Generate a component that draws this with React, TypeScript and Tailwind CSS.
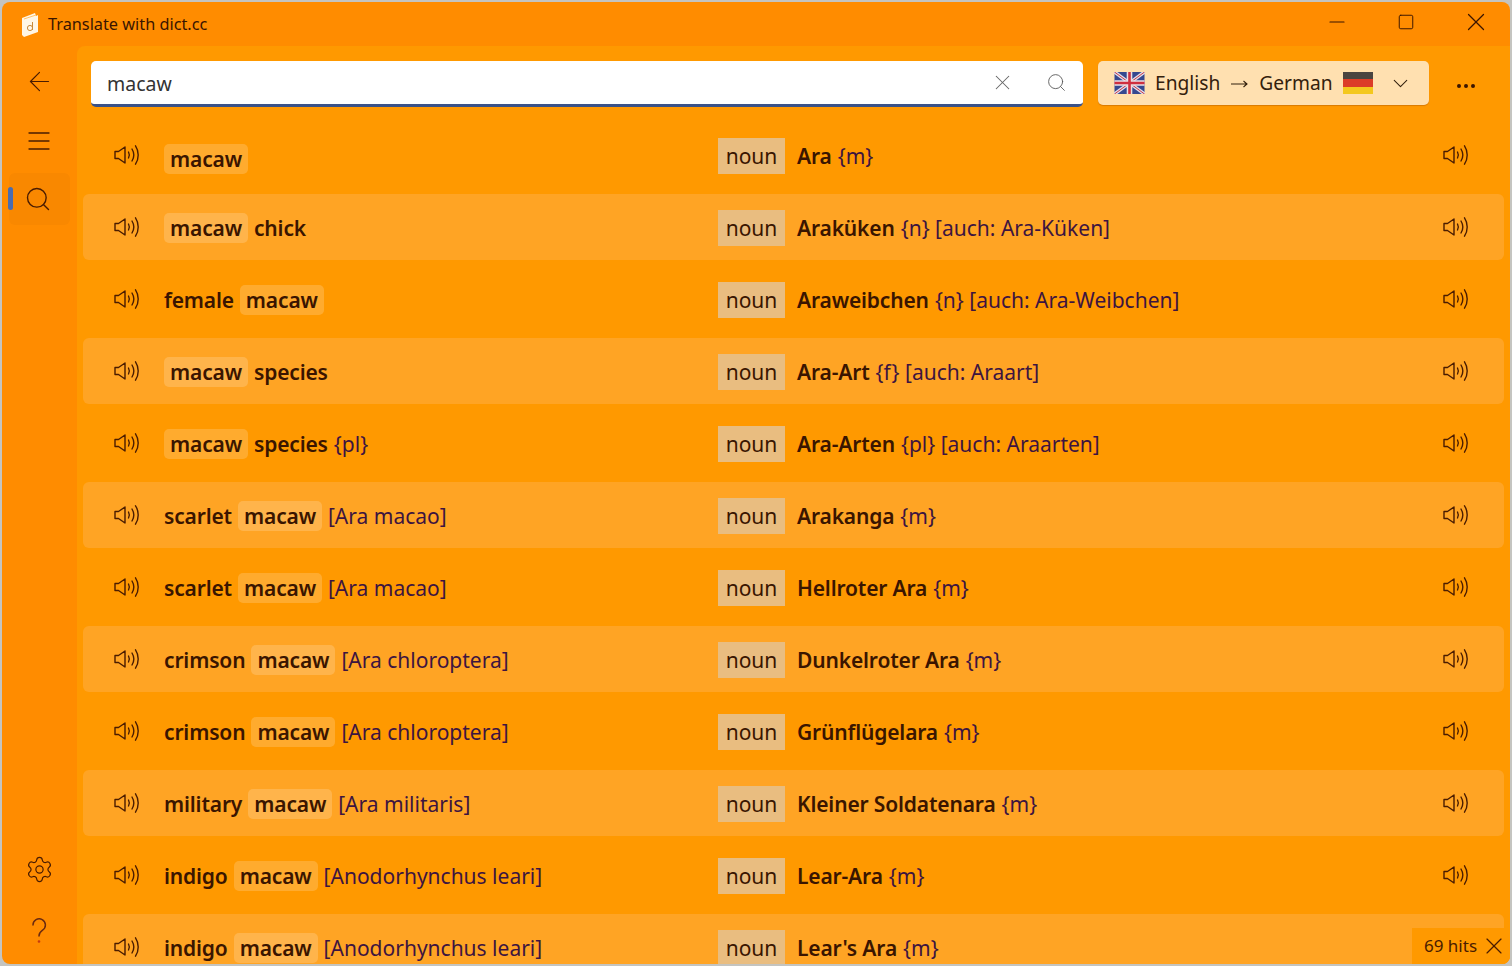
import { ArrowLeft, ChevronDown, Minus, MoreHorizontal, Search, Settings, Square, X } from "lucide-react";

interface Row {
  before?: string;
  after?: string;
  note?: string;
  de: string;
  deNote: string;
}

const rows: Row[] = [
  { de: "Ara", deNote: "{m}" },
  { after: "chick", de: "Araküken", deNote: "{n} [auch: Ara-Küken]" },
  { before: "female", de: "Araweibchen", deNote: "{n} [auch: Ara-Weibchen]" },
  { after: "species", de: "Ara-Art", deNote: "{f} [auch: Araart]" },
  { after: "species", note: "{pl}", de: "Ara-Arten", deNote: "{pl} [auch: Araarten]" },
  { before: "scarlet", note: "[Ara macao]", de: "Arakanga", deNote: "{m}" },
  { before: "scarlet", note: "[Ara macao]", de: "Hellroter Ara", deNote: "{m}" },
  { before: "crimson", note: "[Ara chloroptera]", de: "Dunkelroter Ara", deNote: "{m}" },
  { before: "crimson", note: "[Ara chloroptera]", de: "Grünflügelara", deNote: "{m}" },
  { before: "military", note: "[Ara militaris]", de: "Kleiner Soldatenara", deNote: "{m}" },
  { before: "indigo", note: "[Anodorhynchus leari]", de: "Lear-Ara", deNote: "{m}" },
  { before: "indigo", note: "[Anodorhynchus leari]", de: "Lear's Ara", deNote: "{m}" },
];

// speaker with three sound waves
const Speaker = () => (
  <svg width="26" height="22" viewBox="0 0 26 22" fill="none" stroke="#4a1c00" strokeWidth="1.4" strokeLinecap="round" strokeLinejoin="round">
    <path d="M1 7.5h3.5L11 3v16l-6.5-4.5H1z" />
    <path d="M14.5 8c1 1.8 1 4.2 0 6" />
    <path d="M18 5c2.2 3.6 2.2 8.4 0 12" />
    <path d="M21.5 1.8c3.6 5.4 3.6 13 0 18.4" />
  </svg>
);

const UkFlag = () => (
  <svg width="31" height="22" viewBox="0 0 30 22">
    <rect width="30" height="22" fill="#36488f" />
    <path d="M0 0l30 22M30 0L0 22" stroke="#e0dce8" strokeWidth="3.4" />
    <path d="M0 0l30 22M30 0L0 22" stroke="#c5394a" strokeWidth="1" />
    <path d="M15 0v22M0 11h30" stroke="#e8e0e6" strokeWidth="5.6" />
    <path d="M15 0v22M0 11h30" stroke="#cf2f3f" strokeWidth="2.6" />
  </svg>
);

const DeFlag = () => (
  <div className="flex h-[22px] w-[30px] flex-col">
    <div className="flex-1 bg-[#4a4440]" />
    <div className="flex-1 bg-[#dc3c28]" />
    <div className="flex-1 bg-[#f4c81e]" />
  </div>
);

const BookIcon = () => (
  <svg width="18" height="25" viewBox="0 0 18 25">
    <path d="M1 6L14 1l1 3 2-1v17L3 25l-2-2z" fill="#fff6e6" />
    <path d="M3 7l12-4" stroke="#ffc36b" strokeWidth="1" />
    <circle cx="9" cy="16" r="2.6" fill="none" stroke="#c98a3a" strokeWidth="1" />
    <path d="M11.5 10v8" stroke="#c98a3a" strokeWidth="1" />
  </svg>
);

const Term = () => (
  <span className="rounded-[5px] bg-white/[0.18] px-[6px] leading-[30px] font-semibold tracking-[-0.15px]">macaw</span>
);

const ResultRow = ({ row, index }: { row: Row; index: number }) => (
  <div className={`mx-[6px] my-[3px] flex h-[66px] shrink-0 items-center rounded-[6px] ${index % 2 === 1 ? "bg-[#ffa424]" : ""}`}>
    <div className="flex w-[81px] justify-end pr-[24px]">
      <Speaker />
    </div>
    <div className={`flex w-[554px] items-baseline gap-[6px] text-[21px] text-[#3a1500] ${index === 0 ? "pt-[8px]" : "pt-[3px]"}`}>
      {row.before && <span className="font-semibold tracking-[-0.15px]">{row.before}</span>}
      <Term />
      {row.after && <span className="font-semibold tracking-[-0.15px]">{row.after}</span>}
      {row.note && <span className="text-[#3d1440]">{row.note}</span>}
    </div>
    <div className="mt-[2px] flex h-[36px] w-[67px] items-center justify-center bg-[#e9bd80] pt-[2px] text-[21px] text-[#3a1500]">noun</div>
    <div className="ml-[12px] flex flex-1 items-baseline gap-[6px] pt-[4px] text-[21px] text-[#3a1500]">
      <span className="font-semibold tracking-[-0.15px]">{row.de}</span>
      <span className="text-[#3d1440]">{row.deNote}</span>
    </div>
    <div className="flex w-[62px] pl-[1px]">
      <Speaker />
    </div>
  </div>
);

export default function App() {
  return (
    <div className="h-[966px] w-[1512px] overflow-hidden bg-[#c4c4c0] p-[2px] font-['Noto_Sans',sans-serif]">
      <div className="relative flex h-full flex-col overflow-hidden rounded-[8px] bg-[#ff8c00]">
        <div className="flex h-[44px] shrink-0 items-center text-[#3a1500]">
          <div className="ml-[19px] flex w-[27px]">
            <BookIcon />
          </div>
          <span className="text-[16.3px]">Translate with dict.cc</span>
          <div className="-mt-[4px] ml-auto flex items-center">
            <Minus size={24} strokeWidth={1.2} className="mr-[48px]" />
            <Square size={18} strokeWidth={1.3} className="mr-[46px]" />
            <X size={30} strokeWidth={1} className="mr-[19px]" />
          </div>
        </div>
        <div className="flex min-h-0 flex-1">
          <div className="flex w-[75px] shrink-0 flex-col items-center pb-[20px] pr-[1px] pt-[20px] text-[#4a1c00]">
            <ArrowLeft size={31} strokeWidth={0.9} />
            <svg width="22" height="18" viewBox="0 0 22 18" stroke="currentColor" strokeWidth="1.3" strokeLinecap="round" className="mt-[35px]">
              <path d="M1 1h20M1 9h20M1 17h20" />
            </svg>
            <div className="relative mt-[23px] flex h-[52px] w-[61px] items-center justify-center rounded-[6px] bg-[#f98800]">
              <div className="absolute -left-px top-[14px] h-[23px] w-[5px] rounded-full bg-[#4a6cb0]" />
              <Search size={28} strokeWidth={1.2} className="-ml-[3px]" />
            </div>
            <Settings size={29} strokeWidth={1} className="mt-auto" />
            <svg width="18" height="26" viewBox="0 0 18 26" fill="none" stroke="#6b2a10" strokeWidth="1.5" strokeLinecap="round" className="mt-[34px]">
              <path d="M3 7a6.2 6.2 0 1 1 9.6 5.2C10.5 13.6 9 15 9 18" />
              <circle cx="9" cy="23.5" r="0.6" fill="#c43a10" stroke="#c43a10" />
            </svg>
          </div>
          <div className="flex min-w-0 flex-1 flex-col rounded-tl-[8px] bg-[#ff9900]">
            <div className="flex h-[73px] shrink-0 items-start pt-[15px]">
              <div className="ml-[14px] flex h-[46px] w-[992px] items-center rounded-[5px] border-b-[3px] border-[#3a5288] bg-white pl-[16px] text-[19.5px] text-[#333]">
                <span className="pt-[2px]">macaw</span>
                <X size={25} strokeWidth={1} className="ml-auto text-[#666]" />
                <Search size={21} strokeWidth={1} className="ml-[31px] mr-[16px] text-[#555]" />
              </div>
              <div className="ml-[15px] flex h-[44px] w-[331px] items-center rounded-[5px] bg-[#ffe0b0] pl-[16px] text-[19.2px] text-[#33200c] shadow-[0_1px_1px_#d97a00]">
                <UkFlag />
                <span className="ml-[10px]">English</span>
                <svg width="17" height="12" viewBox="0 0 17 12" fill="none" stroke="currentColor" strokeWidth="1.1" className="ml-[11px] mr-[11px] mt-[2px]">
                  <path d="M0 6h16M12.5 3l3.5 3-3.5 3" />
                </svg>
                <span>German</span>
                <div className="ml-[10px]">
                  <DeFlag />
                </div>
                <ChevronDown size={25} strokeWidth={1} className="ml-[15px]" />
              </div>
              <MoreHorizontal size={24} strokeWidth={2} className="ml-[25px] mt-[13px] text-[#3a1500]" />
            </div>
            <div className="flex min-h-0 flex-1 flex-col overflow-hidden">
              {rows.map((row, i) => (
                <ResultRow key={i} row={row} index={i} />
              ))}
            </div>
          </div>
        </div>
        <div className="absolute bottom-0 right-0 flex h-[36px] w-[98px] items-center gap-[3px] bg-[#ff9900] pl-[12px] text-[17px] text-[#4a1c00]">
          69 hits
          <X size={28} strokeWidth={1} />
        </div>
      </div>
    </div>
  );
}
